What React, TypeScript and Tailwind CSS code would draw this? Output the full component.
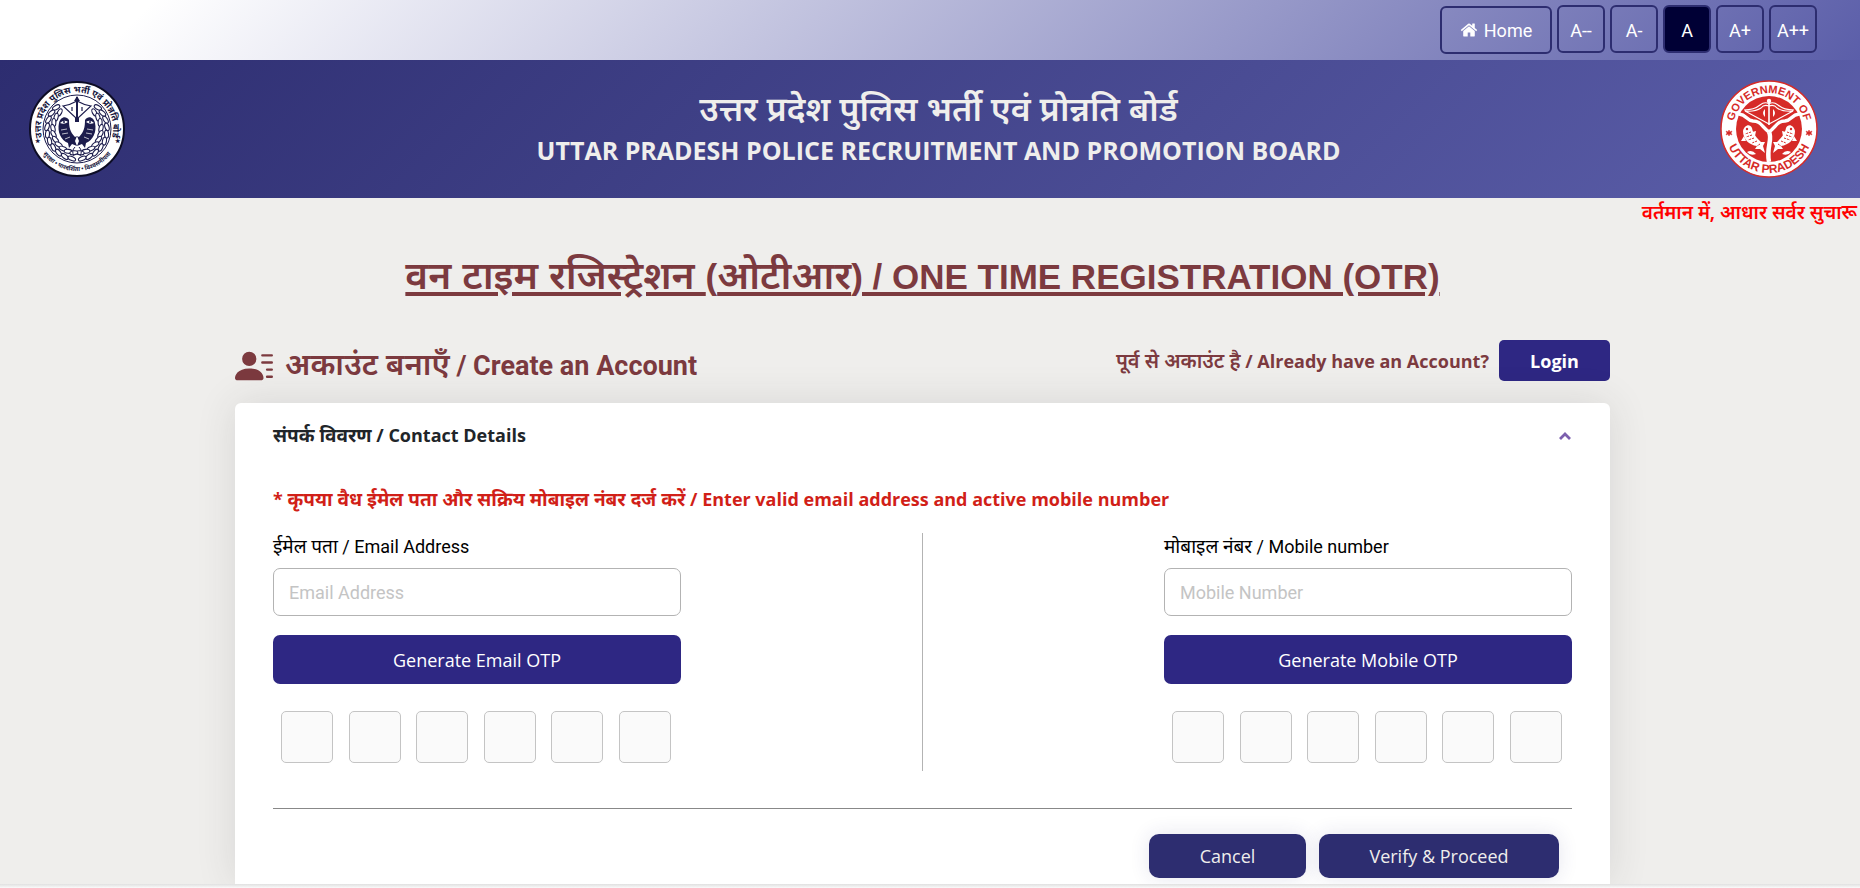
import { useState, type ReactNode } from 'react'
import { BsPersonLinesFill } from 'react-icons/bs'

const sizes = ['A--', 'A-', 'A', 'A+', 'A++']

function HomeIcon() {
  return (
    <svg className="w-[18px] h-[18px]" viewBox="0 0 1792 1792" fill="currentColor" aria-hidden="true">
      <path d="M1472 992v480q0 26-19 45t-45 19h-384v-384h-256v384h-384q-26 0-45-19t-19-45v-480q0-1 .5-3t.5-3l575-474 575 474q1 2 1 6zm223-69l-62 74q-8 9-21 11h-3q-13 0-21-7l-692-577-692 577q-12 8-24 7-13-2-21-11l-62-74q-8-10-7-23.5t11-21.5l719-599q32-26 76-26t76 26l244 204v-195q0-14 9-23t23-9h192q14 0 23 9t9 23v408l219 182q10 8 11 21.5t-7 23.5z" />
    </svg>
  )
}

function PoliceLogo() {
  const leaves = Array.from({ length: 10 }, (_, i) => i * 14 - 46)
  return (
    <svg className="w-24 h-24 shrink-0" viewBox="-48 -48 96 96" role="img" aria-label="UP Police">
      <defs>
        <path id="pl-top" d="M-35 8A36 36 0 1 1 35 8" />
        <path id="pl-bottom" d="M-42 0A42 42 0 0 0 42 0" />
      </defs>
      <circle r="47" fill="#fff" stroke="#0d0d25" strokeWidth="2" />
      <circle r="34" fill="none" stroke="#1c1c4c" strokeWidth="1" />
      <g fontFamily="Noto Sans, sans-serif" fontWeight="700" fill="#14143c" textAnchor="middle">
        <text fontSize="9"><textPath href="#pl-top" startOffset="50%">उत्तर प्रदेश पुलिस भर्ती एवं प्रोन्नति बोर्ड</textPath></text>
        <text fontSize="6"><textPath href="#pl-bottom" startOffset="50%">सुरक्षा  •  पारदर्शिता  •  विश्वसनीयता</textPath></text>
        <text x="-40" y="14" fontSize="6">★</text>
        <text x="40" y="14" fontSize="6">★</text>
      </g>
      {[1, -1].map(side => (
        <g key={side} transform={`scale(${side},1)`}>
          {/* Wreath */}
          <g fill="#fff" stroke="#1c1c4c" strokeWidth="1.1">
            {leaves.map(a => (
              <g key={a} transform={`rotate(${a})`}>
                <ellipse cx="30" cy="0" rx="2" ry="4" transform="rotate(-14 30 0)" />
                <ellipse cx="24" cy="1" rx="2" ry="4" transform="rotate(18 24 1)" />
              </g>
            ))}
          </g>
          {/* Fish */}
          <path d="M18-6C17-12 11-14 8-9C8-2 7 3 2 8L0 7L2 12L0 17L5 15L8 19L9 14C16 11 20 3 18-6Z" fill="#1c1c4c" />
          <path d="M9-7q4-3 8 1q-4 2-8-1z" fill="#fff" />
          <circle cx="13" cy="-7" r="1" fill="#1c1c4c" />
          <path d="M10 0l6 1M9 4l6 1M7 8l5 2" stroke="#fff" strokeWidth="0.7" />
        </g>
      ))}
      {/* Bow and arrow */}
      <path d="M-14-23Q-7-24 0-28Q7-24 14-23L0-10Z" fill="#fff" stroke="#1c1c4c" strokeWidth="1.2" />
      <path d="M0-32V-7" stroke="#1c1c4c" strokeWidth="2" />
      <path d="M-3-28L0-33L3-28ZM-2-7h4v-4h-4z" fill="#1c1c4c" />
      <path d="M-5-22v4M5-22v4" stroke="#1c1c4c" strokeWidth="1.2" />
      <path d="M-2 18Q-6 22-3 27M2 18Q6 22 3 27" stroke="#1c1c4c" strokeWidth="1" fill="none" />
    </svg>
  )
}

function GovLogo() {
  return (
    <svg className="w-[98px] h-[98px] shrink-0" viewBox="-49 -49 98 98" role="img" aria-label="Government of Uttar Pradesh">
      <defs>
        <path id="gov-top" d="M-36 0A36 36 0 0 1 36 0" />
        <path id="gov-bottom" d="M-44 0A44 44 0 0 0 44 0" />
      </defs>
      <circle r="48" fill="#fff" stroke="#d62b28" strokeWidth="1.5" />
      <circle r="33" fill="#d62b28" />
      <g fontFamily="Liberation Sans, sans-serif" fontWeight="700" fill="#d62b28" textAnchor="middle">
        <text fontSize="11"><textPath href="#gov-top" startOffset="50%">GOVERNMENT OF</textPath></text>
        <text fontSize="12"><textPath href="#gov-bottom" startOffset="50%">UTTAR PRADESH</textPath></text>
      </g>
      {/* Rivers */}
      <path d="M0 3C4 10-3 18 0 33" fill="none" stroke="#fff" strokeWidth="4.5" />
      {[1, -1].map(side => (
        <g key={side} transform={`scale(${side},1)`}>
          <path d="M30-15C22-14 23-9 16-8C8-8 7-2 0 3" fill="none" stroke="#fff" strokeWidth="3.5" />
          <path d="M40 1l1 2 2-1-1 2 1 2-2-1-1 2-1-2-2 1 1-2-1-2 2 1z" fill="#d62b28" stroke="#d62b28" strokeWidth="0.5" />
          {/* Fish */}
          <path d="M26 2C25-4 19-6 17-1C16 5 12 9 8 13L4 13L6 17L4 24L9 20L14 20L12 17C20 16 26 10 26 2Z" fill="#fff" />
          <path d="M17 3l-4-1 1 5zM25 7l3 5-5 0z" fill="#fff" />
          <circle cx="22" cy="0" r="1.2" fill="#d62b28" />
          <path d="M18 3l6 2M17 6l6 2M15 9l6 2M12 12l5 2M9 15l3 2" stroke="#d62b28" strokeWidth="1" strokeDasharray="2 1" />
          <path d="M13 25q4-5 9-2q-3 4-9 2z" fill="#fff" />
          {/* Half of the bow */}
          <path d="M0-25Q4-28 9-24Q15-19 25-19M0-23Q5-25 8-21Q14-17 24-18L0-5" fill="none" stroke="#fff" strokeWidth="1.1" />
          <path d="M4-20Q8-16 4-12Z" fill="#fff" />
        </g>
      ))}
      <path d="M0-28V-4" stroke="#fff" strokeWidth="1.6" />
      <circle cy="-28" r="2.2" fill="#fff" />
    </svg>
  )
}

interface OtpProps { id: string; type: string; label: ReactNode; placeholder: string; action: string }

function OtpColumn({ id, type, label, placeholder, action }: OtpProps) {
  return (
    <div className="flex flex-col w-[408px]">
      <label htmlFor={id} className="text-[18px] leading-7 text-black mb-[7px]">{label}</label>
      <input id={id} type={type} placeholder={placeholder}
        className="h-12 px-[15px] rounded-[7px] border border-[#b3b3b3] bg-white text-[18px] placeholder:text-[#c4c4c4] outline-none" />
      <button className="mt-[19px] h-[49px] pt-px rounded-[7px] bg-[#2e2783] text-white text-[18px] font-['Open_Sans',sans-serif]">{action}</button>
      <div className="flex justify-between mt-[27px] pl-2 pr-[10px]">
        {[1, 2, 3, 4, 5, 6].map(n => (
          <input key={n} maxLength={1} aria-label={`${action} ${n}`}
            className="w-[52px] h-[52px] rounded-[5px] border border-[#c4c4c4] bg-[#fafafa] text-center outline-none" />
        ))}
      </div>
    </div>
  )
}

export default function App() {
  const [size, setSize] = useState('A')
  const [open, setOpen] = useState(true)

  return (
    <div className="min-h-screen flex flex-col overflow-hidden bg-[#efeeec] font-[Roboto,'Noto_Sans',sans-serif]">
      {/* Accessibility bar */}
      <nav className="h-[60px] flex items-start justify-end gap-[5px] pt-[5px] pr-[43px] text-white text-[18px] bg-linear-[135deg,#fff_8%,#5b5ea9]">
        <a href="#" className="mt-px h-12 w-28 flex items-center justify-center gap-[6px] rounded-md border-2 border-[#2d2d70]">
          <HomeIcon />Home
        </a>
        {sizes.map(s => (
          <button key={s} onClick={() => setSize(s)}
            className={`w-12 h-12 pt-[2px] rounded-md border-2 border-[#2d2d70] ${s === size ? 'bg-[#000035]' : ''}`}>{s}</button>
        ))}
      </nav>

      <header className="h-[138px] flex items-center justify-between pl-[29px] pr-[42px] bg-linear-[135deg,#2d2d70,#5b5ea9]">
        <PoliceLogo />
        <div className="ml-8 pb-1 text-center text-[#efeeec]">
          <div className="text-[34px] leading-[46px] font-semibold font-['Noto_Sans',sans-serif]">उत्तर प्रदेश पुलिस भर्ती एवं प्रोन्नति बोर्ड</div>
          <div className="text-[25px] leading-[38px] font-bold font-['Open_Sans',sans-serif]">UTTAR PRADESH POLICE RECRUITMENT AND PROMOTION BOARD</div>
        </div>
        <GovLogo />
      </header>

      <main className="flex-1 flex flex-col pr-[15px]">
        <div className="-mr-[15px] overflow-hidden">
          <p className="ml-[88%] pl-[5px] text-[19px] leading-7 font-semibold whitespace-nowrap text-[#ff0000] font-['Noto_Sans',sans-serif]">
            वर्तमान में, आधार सर्वर सुचारू
          </p>
        </div>
        <h1 className="mt-[22px] text-center text-[35px] leading-[56px] font-bold underline decoration-4 underline-offset-3 text-[#7c3a3f] font-['Liberation_Sans','Noto_Sans',sans-serif]">
          <span className="text-[39px] font-semibold">वन टाइम रजिस्ट्रेशन </span>(<span className="text-[39px] font-semibold">ओटीआर</span>) / ONE TIME REGISTRATION (OTR)
        </h1>

        <div className="flex-1 flex flex-col w-[1375px] max-w-full mx-auto mt-[35px]">
          <div className="flex items-start justify-between text-[#7c3a3f]">
            <h2 className="flex items-center gap-3 text-[27px] leading-[50px] font-bold">
              <BsPersonLinesFill size={38} />
              <span><span className="text-[31px] font-semibold">अकाउंट बनाएँ</span> / Create an Account</span>
            </h2>
            <div className="flex items-center gap-[10px] text-[18px] font-bold font-['Open_Sans','Noto_Sans',sans-serif]">
              <span><span className="text-[20px] font-semibold">पूर्व से अकाउंट है</span> / Already have an Account?</span>
              <button className="w-[111px] h-[41px] pt-px rounded-[5px] bg-[#2e2783] text-white">Login</button>
            </div>
          </div>

          <section className="flex-1 mt-3 px-[38px] pb-[5px] rounded-t-[6px] bg-white shadow-[0_0_40px_rgba(51,51,51,0.12)]">
            <button onClick={() => setOpen(!open)} aria-expanded={open}
              className="w-full h-16 pt-px flex items-center justify-between text-[18px] font-bold text-[#212529] font-['Open_Sans','Noto_Sans',sans-serif]">
              <span><span className="text-[19px]">संपर्क विवरण</span> / Contact Details</span>
              <svg className="w-3 h-3 mr-px text-[#7c5fae]" viewBox="0 0 12 12" fill="none" stroke="currentColor" strokeWidth="2.8" aria-hidden="true">
                <path d="M1 9L6 4L11 9" />
              </svg>
            </button>
            {open && (
              <>
                <p className="mt-[18px] text-[18px] leading-7 font-bold text-[#d11f18] font-['Open_Sans','Noto_Sans',sans-serif]">
                  * <span className="text-[19px]">कृपया वैध ईमेल पता और सक्रिय मोबाइल नंबर दर्ज करें</span> / Enter valid email address and active mobile number
                </p>
                <div className="flex justify-between mt-5 pb-2">
                  <OtpColumn id="email" type="email" label={<><span className="text-[19px]">ईमेल पता</span> / Email Address</>} placeholder="Email Address" action="Generate Email OTP" />
                  <div className="w-px -mb-2 bg-[#b3b3b3]" />
                  <OtpColumn id="mobile" type="tel" label={<><span className="text-[19px]">मोबाइल नंबर</span> / Mobile number</>} placeholder="Mobile Number" action="Generate Mobile OTP" />
                </div>
                <hr className="mt-[37px] border-[#888]" />
                <div className="flex justify-end gap-[13px] mt-[25px] pr-[13px] text-[18px] text-[#efeeec] font-['Open_Sans',sans-serif]">
                  <button className="w-[157px] h-11 rounded-[10px] bg-[#2d2d70] shadow-[0_0_20px_rgba(45,45,112,0.12)]">Cancel</button>
                  <button className="w-60 h-11 rounded-[10px] bg-[#2d2d70] shadow-[0_0_20px_rgba(45,45,112,0.12)]">Verify &amp; Proceed</button>
                </div>
              </>
            )}
          </section>
        </div>
      </main>
      <footer className="relative h-1 bg-linear-to-b from-[#e0e0e0] to-[#fafafa]" />
    </div>
  )
}
